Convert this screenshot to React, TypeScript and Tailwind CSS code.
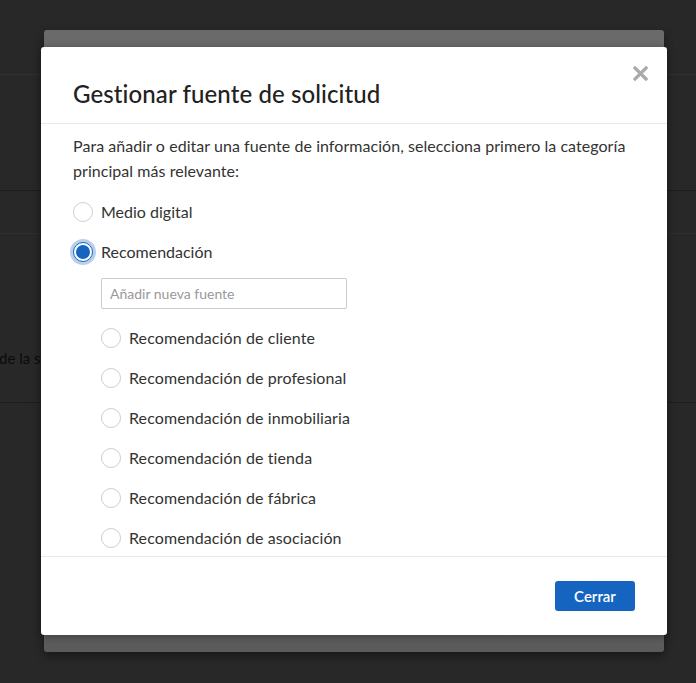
import { useState } from 'react';

const sources = [
  'Recomendación de cliente',
  'Recomendación de profesional',
  'Recomendación de inmobiliaria',
  'Recomendación de tienda',
  'Recomendación de fábrica',
  'Recomendación de asociación',
];

function Radio({ checked }: { checked?: boolean }) {
  if (checked) {
    return (
      <span className="w-5 h-5 rounded-full border border-[#1565c0] bg-white flex items-center justify-center shrink-0 shadow-[0_0_0_3px_rgba(21,101,192,0.3)]">
        <span className="w-[14px] h-[14px] rounded-full bg-[#1565c0]" />
      </span>
    );
  }
  return <span className="w-5 h-5 rounded-full border border-[#cfcfcf] bg-white shrink-0" />;
}

export default function App() {
  const [selected, setSelected] = useState('Recomendación');
  const [sub, setSub] = useState<string | null>(null);

  return (
    <div className="relative w-full h-[683px] overflow-hidden bg-[#282828] font-['Lato',sans-serif] text-[#333]">
      {/* Page behind the overlay */}
      <div className="flex flex-col">
        <div className="h-[75px] border-b border-[#303030]" />
        <div className="h-[116px] border-b border-[#1c1c1c]" />
        <div className="h-[43px] border-b border-[#2f2f2f]" />
        <div className="h-[169px] border-b border-[#1d1d1d] flex items-center">
          <span className="text-[15px] text-[#0b0b0b] pt-[80px] -ml-[1px]">de la solicitud</span>
        </div>
      </div>

      {/* Modal stacked behind */}
      <div className="absolute left-[44px] top-[30px] w-[620px] h-[622px] rounded-[3px] bg-gradient-to-b from-[#6a6a6a] from-90% to-[#5a5a5a] shadow-[0_4px_10px_rgba(0,0,0,0.4)]" />

      {/* Modal */}
      <div className="absolute left-[41px] top-[47px] w-[626px] h-[588px] bg-white rounded-[3px] flex flex-col shadow-[0_2px_8px_rgba(0,0,0,0.35)]">
        <div className="relative h-[77px] shrink-0 border-b border-[#e8e8e8] flex items-center px-8 pt-[17px]">
          <h2 className="text-[24px] font-medium text-[#222] tracking-[0.1px]">Gestionar fuente de solicitud</h2>
          <button className="absolute right-[18px] top-[18px] p-[1px] text-[#aaa]">
            <svg width="15" height="15" viewBox="0 0 15 15">
              <path d="M2 2L13 13M13 2L2 13" stroke="currentColor" strokeWidth={3.2} strokeLinecap="square" />
            </svg>
          </button>
        </div>

        <div className="flex-1 overflow-hidden px-8 pt-[9px]">
          <p className="text-[16px] leading-[25px] text-[#333] tracking-[0.05px]">
            Para añadir o editar una fuente de información, selecciona primero la categoría principal más relevante:
          </p>
          <div className="pt-[9px]">
            {['Medio digital', 'Recomendación'].map((label) => (
              <label key={label} className="h-10 flex items-center gap-2 cursor-pointer" onClick={() => setSelected(label)}>
                <Radio checked={selected === label} />
                <span className="text-[16px]">{label}</span>
              </label>
            ))}
            <div className="pl-7 pt-[6px]">
              <input
                placeholder="Añadir nueva fuente"
                className="w-[246px] h-[31px] border border-[#cccccc] rounded-[2px] px-2 text-[14px] placeholder:text-[#999] outline-none"
              />
              <div className="pt-[9px]">
                {sources.map((s) => (
                  <label key={s} className="h-10 flex items-center gap-2 cursor-pointer" onClick={() => setSub(s)}>
                    <Radio checked={sub === s} />
                    <span className="text-[16px] tracking-[0.1px]">{s}</span>
                  </label>
                ))}
              </div>
            </div>
          </div>
        </div>

        <div className="h-[79px] shrink-0 border-t border-[#e8e8e8] flex items-center justify-end px-8">
          <button className="w-20 h-[30px] rounded-[3px] bg-[#1565c0] text-white text-[15px] font-semibold">
            Cerrar
          </button>
        </div>
      </div>
    </div>
  );
}
